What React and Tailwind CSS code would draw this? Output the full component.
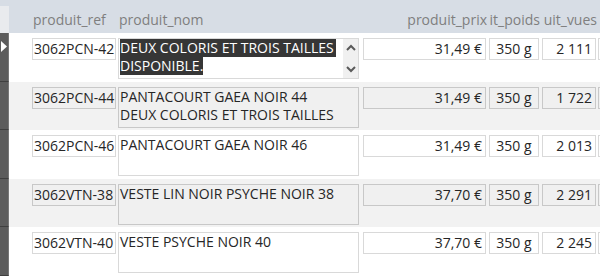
const rows = [
  { ref: "3062PCN-42", lines: ["DEUX COLORIS ET TROIS TAILLES", "DISPONIBLE."], prix: "31,49 €", poids: "350 g", vues: "2 111", current: true, h: "h-[49px]" },
  { ref: "3062PCN-44", lines: ["PANTACOURT GAEA NOIR 44", "DEUX COLORIS ET TROIS TAILLES"], prix: "31,49 €", poids: "350 g", vues: "1 722", alt: true, h: "h-[48px]" },
  { ref: "3062PCN-46", lines: ["PANTACOURT GAEA NOIR 46"], prix: "31,49 €", poids: "350 g", vues: "2 013", h: "h-[49px]" },
  { ref: "3062VTN-38", lines: ["VESTE LIN NOIR PSYCHE NOIR 38"], prix: "37,70 €", poids: "350 g", vues: "2 291", alt: true, h: "h-[48px]" },
  { ref: "3062VTN-40", lines: ["VESTE PSYCHE NOIR 40"], prix: "37,70 €", poids: "350 g", vues: "2 245", h: "h-[49px]" },
];

// column labels are clipped on the left when wider than the column
const HeaderCell = ({ w, children, right }) => (
  <div className={`${w} shrink-0 overflow-hidden whitespace-nowrap flex ${right ? "justify-end" : "justify-start"}`}>
    <span className="shrink-0">{children}</span>
  </div>
);

const Chevron = ({ up }) => (
  <svg width="10" height="7" viewBox="0 0 10 7" fill="none" stroke="#5a5a5a" strokeWidth="2">
    {up ? <path d="M1 6 L5 2 L9 6" /> : <path d="M1 1 L5 5 L9 1" />}
  </svg>
);

const Row = ({ r }) => {
  const box = r.alt ? "bg-[#f0f0f0] border-[#c8c8c8]" : "bg-white border-[#d9d9d9]";
  return (
    <div className={`flex ${r.h} ${r.alt ? "bg-[#f2f2f2]" : "bg-white"}`}>
      <div className="w-[9px] shrink-0 bg-[#5c5c5c] border-r border-[#777] border-b border-b-[#3f3f3f] flex items-start pt-[8px]">
        {r.current && (
          <svg width="7" height="11" viewBox="0 0 7 11" className="ml-[1px]">
            <path d="M0 0 L6 5.5 L0 11 Z" fill="#fff" />
          </svg>
        )}
      </div>
      <div className="flex items-start pt-[5px] pl-[23px] text-[14px] text-[#262626]">
        <div className={`w-[84px] h-[22px] border ${box} pl-[1px] leading-[20px] whitespace-nowrap`}>{r.ref}</div>
        <div className={`ml-[2px] w-[241px] h-[41px] border ${box} flex`}>
          <div className="flex-1 pl-[1px] leading-[17.5px] whitespace-nowrap overflow-hidden">
            {r.current ? (
              <>
                <span className="bg-[#363636] text-white pr-[2px]">{r.lines[0]}</span>
                <br />
                <span className="bg-[#363636] text-white">{r.lines[1]}</span>
              </>
            ) : (
              r.lines.map((l, i) => <div key={i}>{l}</div>)
            )}
          </div>
          {r.current && (
            <div className="w-[15px] bg-[#f0f0f0] flex flex-col items-center justify-between py-[5px]">
              <Chevron up />
              <Chevron />
            </div>
          )}
        </div>
        <div className={`ml-[4px] w-[123px] h-[22px] border ${box} pr-[3px] text-right leading-[20px] whitespace-nowrap`}>{r.prix}</div>
        <div className={`ml-[3px] w-[50px] h-[22px] border ${box} text-center leading-[20px] whitespace-nowrap`}>{r.poids}</div>
        <div className={`ml-[3px] w-[54px] h-[22px] border ${box} pr-[3px] text-right leading-[20px] whitespace-nowrap`}>{r.vues}</div>
        <div className={`ml-[2px] w-[20px] h-[22px] border ${box}`} />
      </div>
    </div>
  );
};

export default function App() {
  return (
    <div className="w-[600px] h-[276px] overflow-hidden bg-white" style={{ fontFamily: '"Open Sans", "Noto Sans", sans-serif' }}>
      <div className="flex h-[33px] bg-[#d7dde5] text-[14px] text-[#7f7f7f] items-center pt-[6px]">
        <div className="w-[9px] h-full shrink-0 bg-[#e9ebee]" />
        <div className="flex pl-[24px]">
          <HeaderCell w="w-[84px]">produit_ref</HeaderCell>
          <HeaderCell w="w-[241px] ml-[2px]">produit_nom</HeaderCell>
          <HeaderCell w="w-[123px] ml-[4px]" right>produit_prix</HeaderCell>
          <HeaderCell w="w-[50px] ml-[3px]" right>produit_poids</HeaderCell>
          <HeaderCell w="w-[54px] ml-[3px]" right>produit_vues</HeaderCell>
        </div>
      </div>
      {rows.map((r) => (
        <Row key={r.ref} r={r} />
      ))}
    </div>
  );
}
